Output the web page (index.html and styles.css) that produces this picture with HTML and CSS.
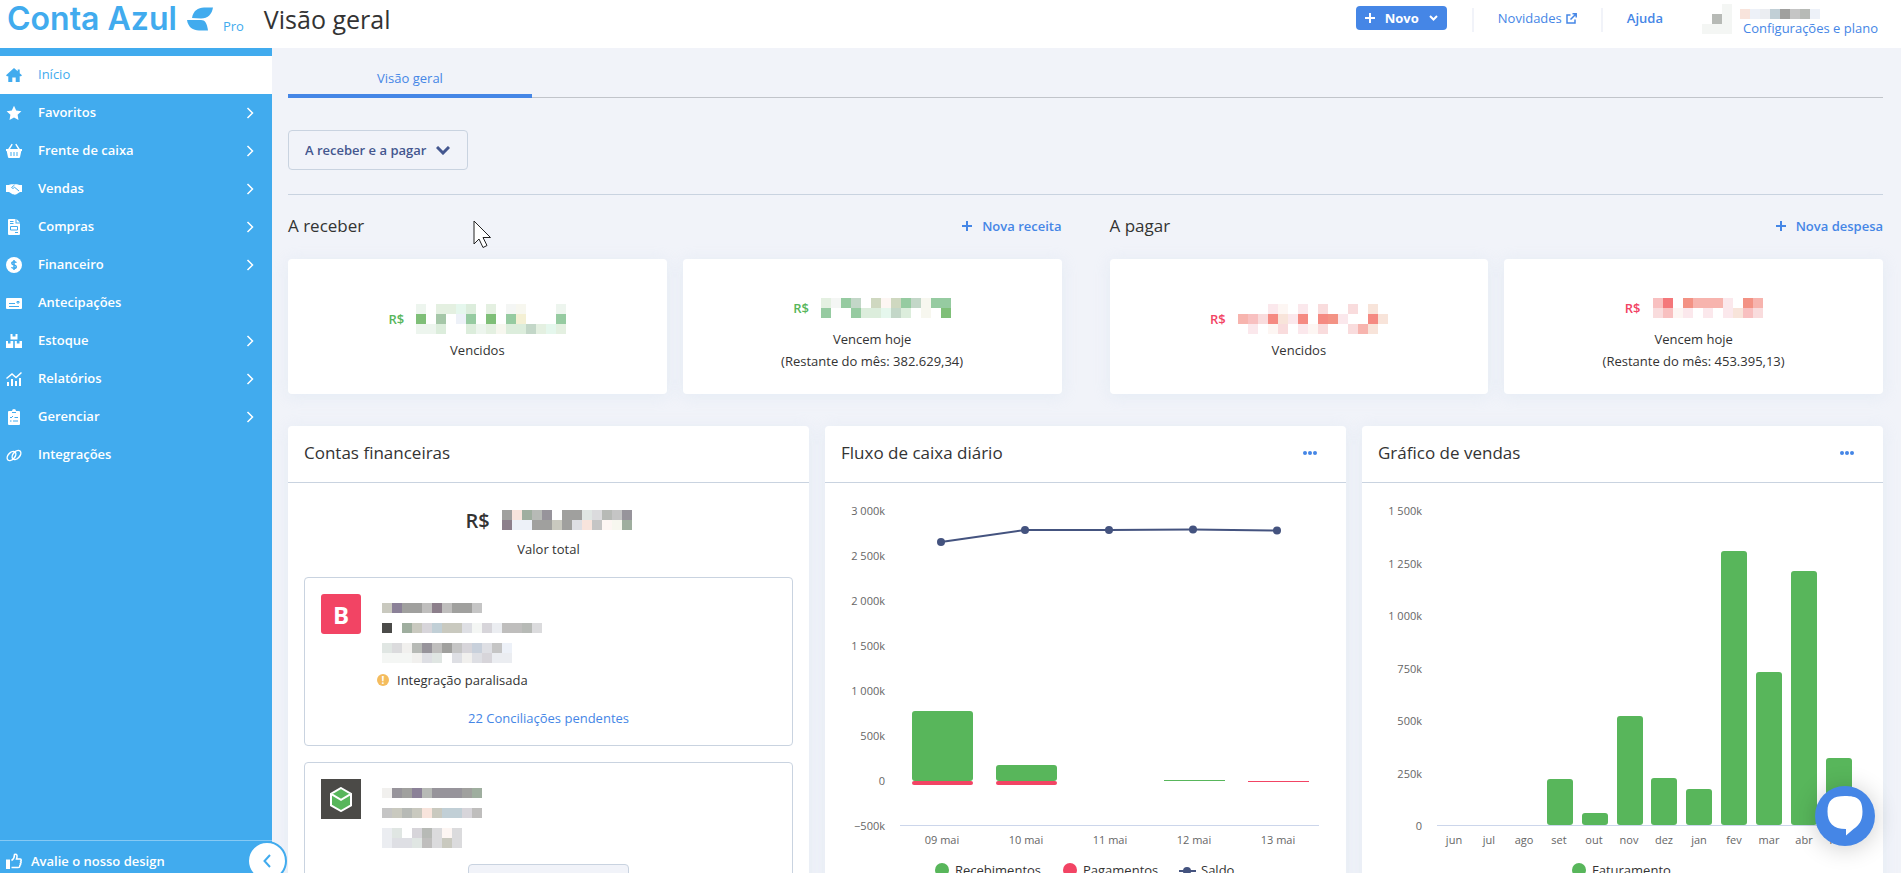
FILE: index.html
```html
<!DOCTYPE html>
<html lang="pt-BR">

<head>
    <meta charset="UTF-8">
    <meta name="viewport" content="width=device-width, initial-scale=1.0">
    <title>Conta Azul Pro - Visão geral</title>
    <link rel="stylesheet" href="styles.css">
</head>

<body>
    <header class="topbar">
        <a class="logo" href="#">
            <span class="logo-name">Conta Azul</span>
            <svg class="logo-bird" width="26" height="24" viewBox="0 0 26 24">
                <path d="M5 11C6 4 11 .5 17 .5h9C25 7 21 11.500 14 11.500z" />
                <path d="M0 13h14c4 0 6 3 7 10.500h-9C6 23.500 1 20 0 13z" />
            </svg>
            <span class="logo-plan">Pro</span>
        </a>
        <h1 class="page-title">Visão geral</h1>

        <div class="topbar-actions">
            <button class="btn-new" type="button">
                <svg width="10" height="10" viewBox="0 0 10 10"><path d="M5 0v10M0 5h10" /></svg>
                Novo
                <svg width="9" height="6" viewBox="0 0 9 6"><path d="M1 1l3.500 3.500L8 1" /></svg>
            </button>
            <a class="top-link top-news" href="#">Novidades
                <svg width="11" height="11" viewBox="0 0 11 11"><path d="M4.500 2H1v8h8V6.500M6.500 .8h3.700v3.700M10 1L4.500 6.500" /></svg>
            </a>
            <a class="top-link top-help" href="#">Ajuda</a>
            <div class="user">
                <svg class="mosaic" data-rows="..l|.nl|lll"></svg>
                <div class="user-info">
                    <svg class="mosaic" data-rows="pqmjcfnq"></svg>
                    <a href="#">Configurações e plano</a>
                </div>
            </div>
        </div>
    </header>

    <div class="layout">
        <aside class="sidebar">
            <nav class="menu">
                <a class="menu-item active" href="#">
                    <svg class="icon" viewBox="0 0 16 16"><path d="M8 1L0 8.200 1 9.300h1.300V15H6.300v-4.500h3.400V15h4V9.300H15l1-1.100-2.300-2V2.500h-2v1.800z" /></svg>
                    <span>Início</span>
                </a>
                <a class="menu-item" href="#">
                    <svg class="icon" viewBox="0 0 16 16"><path d="M8 .8l2.200 4.700 5.200.7-3.800 3.600.9 5.200L8 12.500 3.500 15l.9-5.200L.6 6.200l5.200-.7z" /></svg>
                    <span>Favoritos</span>
                    <svg class="chevron" viewBox="0 0 8 12"><path d="M1.500 1l5 5-5 5" /></svg>
                </a>
                <a class="menu-item" href="#">
                    <svg class="icon" viewBox="0 0 16 16"><path d="M0 6h2.200L5.600.8l1.200.7L4 6h8L9.200 1.500l1.200-.7L13.800 6H16v2h-.7L14 14.200c-.1.500-.5.800-1 .800H3c-.5 0-.9-.3-1-.8L.7 8H0zM4.500 9v4h1V9zm3 0v4h1V9zm3 0v4h1V9z" fill-rule="evenodd" /></svg>
                    <span>Frente de caixa</span>
                    <svg class="chevron" viewBox="0 0 8 12"><path d="M1.500 1l5 5-5 5" /></svg>
                </a>
                <a class="menu-item" href="#">
                    <svg class="icon" viewBox="0 0 16 16"><path d="M0 4h2.600L5 3.200h6l2.400.8H16v7h-2l-3.500 2.300c-1 .6-3.500.4-4.300-.3L3 11H0z" /><path class="cut" d="M8.500 4L5.600 6.500c.6 1.200 2 1 3-.2L13 10" /></svg>
                    <span>Vendas</span>
                    <svg class="chevron" viewBox="0 0 8 12"><path d="M1.500 1l5 5-5 5" /></svg>
                </a>
                <a class="menu-item" href="#">
                    <svg class="icon" viewBox="0 0 16 16"><path d="M3 0h6.500v4.500H14V15a1 1 0 0 1-1 1H3a1 1 0 0 1-1-1V1a1 1 0 0 1 1-1zM10.500 0L14 3.500h-3.500z" /><path class="cut" d="M4 2.500h3.500M4 4.500h3.500M4.500 7.500h7v3.500h-7zM9 13.500h3" /></svg>
                    <span>Compras</span>
                    <svg class="chevron" viewBox="0 0 8 12"><path d="M1.500 1l5 5-5 5" /></svg>
                </a>
                <a class="menu-item" href="#">
                    <svg class="icon" viewBox="0 0 16 16"><circle cx="8" cy="8" r="8" /><path class="cut" d="M8 3v10M10.300 5.800C9.800 4.300 5.800 4.300 5.800 6.300c0 2.200 4.500 1.200 4.500 3.400 0 2.100-4.200 2-4.700.4" stroke-width="1.500" /></svg>
                    <span>Financeiro</span>
                    <svg class="chevron" viewBox="0 0 8 12"><path d="M1.500 1l5 5-5 5" /></svg>
                </a>
                <a class="menu-item" href="#">
                    <svg class="icon" viewBox="0 0 16 16"><rect y="3" width="16" height="11" rx="1" /><path class="cut" d="M3 8.500h6M3 11.500h10M11 6.500h2V8h-2z" /></svg>
                    <span>Antecipações</span>
                </a>
                <a class="menu-item" href="#">
                    <svg class="icon" viewBox="0 0 16 16"><path d="M4.500 1h2v2.500h3V1h2v5.500h-7zM0 8h2v2.500h2.500V8h2.700v7H0zM8.800 8h2v2.500h2.700V8H16v7H8.800z" /></svg>
                    <span>Estoque</span>
                    <svg class="chevron" viewBox="0 0 8 12"><path d="M1.500 1l5 5-5 5" /></svg>
                </a>
                <a class="menu-item" href="#">
                    <svg class="icon" viewBox="0 0 16 16"><path d="M1 11h2v4H1zM5 8h2v7H5zM9 10h2v5H9zM13 7h2v8h-2z" /><path class="line" d="M.5 7.500L6 3l4 3.500 5.500-5" /></svg>
                    <span>Relatórios</span>
                    <svg class="chevron" viewBox="0 0 8 12"><path d="M1.500 1l5 5-5 5" /></svg>
                </a>
                <a class="menu-item" href="#">
                    <svg class="icon" viewBox="0 0 16 16"><path d="M3 2h3a2 2 0 0 1 4 0h3a1 1 0 0 1 1 1v12a1 1 0 0 1-1 1H3a1 1 0 0 1-1-1V3a1 1 0 0 1 1-1z" /><path class="cut" d="M6 3.500h4M4 8l1 1 2-2M8.500 8.500H12M4 12h1.500M7 12h5" /></svg>
                    <span>Gerenciar</span>
                    <svg class="chevron" viewBox="0 0 8 12"><path d="M1.500 1l5 5-5 5" /></svg>
                </a>
                <a class="menu-item" href="#">
                    <svg class="icon" viewBox="0 0 16 16"><ellipse class="line" cx="5.500" cy="9" rx="3.300" ry="5.300" transform="rotate(42 5.500 9)" /><ellipse class="line" cx="10.500" cy="8" rx="3.300" ry="5.300" transform="rotate(42 10.500 8)" /></svg>
                    <span>Integrações</span>
                </a>
            </nav>
            <div class="sidebar-footer">
                <a class="rate" href="#">
                    <svg width="16" height="16" viewBox="0 0 16 16"><path class="thumb" d="M0 6.500h4V16H0z" /><path class="line" d="M5.500 7.500c2-1.200 3-3 3-6C10.500.5 11.800 2 10.500 6H14c1.500 0 1.500 1.600.7 2.200.7.700.5 1.800-.3 2.200.4.800.2 1.600-.6 2 .2 1.300-.4 2-1.800 2H5.500" /></svg>
                    Avalie o nosso design
                </a>
                <button class="collapse" type="button" aria-label="Recolher menu">
                    <svg width="8" height="14" viewBox="0 0 8 14"><path d="M7 1L1.500 7 7 13" /></svg>
                </button>
            </div>
        </aside>

        <main class="content">
            <div class="tabs">
                <button class="tab" type="button">Visão geral</button>
            </div>

            <div class="filter">
                <div class="select-box">
                    <select class="select" aria-label="Exibir">
                        <option>A receber e a pagar</option>
                    </select>
                    <svg class="select-arrow" width="14" height="9" viewBox="0 0 14 9"><path d="M1 1l6 6 6-6" /></svg>
                </div>
            </div>

            <div class="summary">
                <section>
                    <div class="summary-head">
                        <h2>A receber</h2>
                        <a href="#"><svg width="10" height="10" viewBox="0 0 10 10"><path d="M5 0v10M0 5h10" /></svg>Nova receita</a>
                    </div>
                    <div class="summary-cards">
                        <div class="summary-card">
                            <div class="amount green">R$ <svg class="mosaic" data-rows="F.EEID.E.lK...F|A.C.qB.A.BG...B|FFD..DFEKDDHEIE"></svg></div>
                            <p>Vencidos</p>
                        </div>
                        <div class="summary-card">
                            <div class="amount green">R$ <svg class="mosaic" data-rows="ElBH.JYJBHKBB|B..BDDIHD.K.A"></svg></div>
                            <p>Vencem hoje</p>
                            <p>(Restante do mês: 382.629,34)</p>
                        </div>
                    </div>
                </section>
                <section>
                    <div class="summary-head">
                        <h2>A pagar</h2>
                        <a href="#"><svg width="10" height="10" viewBox="0 0 10 10"><path d="M5 0v10M0 5h10" /></svg>Nova despesa</a>
                    </div>
                    <div class="summary-cards">
                        <div class="summary-card">
                            <div class="amount red">R$ <svg class="mosaic" data-rows="...UY.U.T..T.X.|SVTRXUR.RZU..RX|.U.YT.UYT..TSX."></svg></div>
                            <p>Vencidos</p>
                        </div>
                        <div class="summary-card">
                            <div class="amount red">R$ <svg class="mosaic" data-rows="VW.ZSSSU.ZS|TVYU.U.UXVT"></svg></div>
                            <p>Vencem hoje</p>
                            <p>(Restante do mês: 453.395,13)</p>
                        </div>
                    </div>
                </section>
            </div>

            <div class="panels">
                <section class="panel">
                    <div class="panel-head">
                        <h2>Contas financeiras</h2>
                    </div>
                    <div class="accounts">
                        <div class="total">R$ <svg class="mosaic" data-rows="cpgnr.cctonfr|eqqcchckpfYKg"></svg></div>
                        <p class="total-label">Valor total</p>
                        <article class="account">
                            <div class="account-main">
                                <div class="bank bank-b">B</div>
                                <div class="account-data">
                                    <svg class="mosaic" data-rows="hbccdedccf"></svg>
                                    <svg class="mosaic" data-rows="a.ghijhhklimddno"></svg>
                                    <svg class="mosaic" data-rows="tounrdcfiskfq|lllukt.kukimm"></svg>
                                </div>
                            </div>
                            <p class="warning"><span class="warning-icon">!</span>Integração paralisada</p>
                            <a class="pending" href="#">22 Conciliações pendentes</a>
                        </article>
                        <article class="account">
                            <div class="account-main">
                                <div class="bank bank-box">
                                    <svg width="22" height="25" viewBox="0 0 22 25">
                                        <path d="M11 1l10 5.800v11.500L11 24 1 18.300V6.800z" />
                                        <path d="M1 6.800l10 6 10-6" />
                                    </svg>
                                </div>
                                <div class="account-data">
                                    <svg class="mosaic" data-rows="urcbnrrrcg"></svg>
                                    <svg class="mosaic" data-rows="fhnhphjjid"></svg>
                                    <svg class="mosaic" data-rows="mt.inoYo|mkktdoho"></svg>
                                </div>
                            </div>
                            <button class="account-btn" type="button" aria-label="Conciliar"></button>
                        </article>
                    </div>
                </section>

                <section class="panel">
                    <div class="panel-head">
                        <h2>Fluxo de caixa diário</h2>
                        <button class="more" type="button" aria-label="Mais opções"><i></i><i></i><i></i></button>
                    </div>
                    <svg class="chart" id="cashChart" viewBox="0 0 521 420"></svg>
                </section>

                <section class="panel">
                    <div class="panel-head">
                        <h2>Gráfico de vendas</h2>
                        <button class="more" type="button" aria-label="Mais opções"><i></i><i></i><i></i></button>
                    </div>
                    <svg class="chart" id="salesChart" viewBox="0 0 521 420"></svg>
                </section>
            </div>
        </main>
    </div>

    <button class="chat" type="button" aria-label="Abrir chat">
        <svg width="36" height="40" viewBox="0 0 36 40"><path d="M18 0c12 0 17.500 3 17.500 15.500 0 10-4 14-9 17.500L19 39.500V33C6 33 .5 27 .5 15.500S6 0 18 0z" /></svg>
    </button>

    <svg class="pointer" width="19" height="28" viewBox="0 0 19 28"><path d="M1 1v23l5-5 4 8.500 4-2-4-8h7.500z" /></svg>

    <script src="script.js"></script>
</body>

</html>
```
FILE: styles.css
```css
* {
    box-sizing: border-box;
}

body {
    margin: 0;
    height: 100vh;
    display: flex;
    flex-direction: column;
    overflow: hidden;
    font-family: "Open Sans", "Noto Sans", sans-serif;
    font-size: 13px;
    color: #333;
    background-color: #f1f3f9;
}

h1,
h2,
p {
    margin: 0;
    font-weight: 500;
}

a {
    color: #4586e6;
    text-decoration: none;
}

button,
select {
    font: inherit;
    cursor: pointer;
}

svg {
    display: block;
    flex-shrink: 0;
}

/* Topo */
.topbar {
    height: 48px;
    flex-shrink: 0;
    display: flex;
    align-items: flex-start;
    padding: 0 23px 0 7px;
    background-color: #fff;
}

.logo {
    display: flex;
    align-items: flex-end;
    height: 37px;
    color: #41abee;
}

.logo-name {
    font-family: Inter, sans-serif;
    font-size: 32px;
    font-weight: 600;
    line-height: 36px;
}

.logo-bird {
    margin: 0 10px 6px;
    fill: #41abee;
}

.logo-plan {
    font-size: 13px;
    line-height: 22px;
    font-weight: 500;
}

.page-title {
    margin-left: 20px;
    font-size: 25px;
    line-height: 38px;
}

.topbar-actions {
    display: flex;
    margin-left: auto;
}

.btn-new {
    display: flex;
    align-items: center;
    gap: 10px;
    height: 24px;
    margin: 6px 25px 0 0;
    padding: 0 9px;
    border: none;
    border-radius: 4px;
    background-color: #4586e6;
    color: #fff;
    font-weight: 700;
}

.btn-new svg {
    fill: none;
    stroke: #fff;
    stroke-width: 2;
}

.top-link {
    display: flex;
    align-items: center;
    gap: 4px;
    height: 24px;
    margin-top: 8px;
    padding: 0 24px;
    border-left: 2px solid #f1f3f9;
    line-height: 20px;
}

.top-link svg {
    fill: none;
    stroke: #4586e6;
    stroke-width: 1.5;
}

.top-news,
.top-help {
    padding-bottom: 4px;
}

.top-help {
    font-weight: 600;
}

.user {
    display: flex;
    gap: 8px;
    margin-left: 15px;
    padding-top: 4px;
}

.user-info {
    padding-top: 5px;
    line-height: 18px;
}

.user-info a {
    padding-left: 3px;
}

/* Menu lateral */
.layout {
    flex: 1;
    min-height: 0;
    display: flex;
}

.sidebar {
    width: 272px;
    flex-shrink: 0;
    display: flex;
    flex-direction: column;
    padding-top: 8px;
    background-color: #41abee;
}

.menu {
    flex: 1;
}

.menu-item {
    display: flex;
    align-items: center;
    gap: 16px;
    height: 38px;
    padding: 0 18px 0 6px;
    color: #fff;
    font-weight: 600;
}

.menu-item span {
    padding-bottom: 2px;
}

.menu-item.active {
    background-color: #fff;
    color: #41abee;
    font-weight: 500;
}

.icon {
    width: 16px;
    height: 16px;
    fill: currentColor;
}

.icon .cut {
    fill: none;
    stroke: #41abee;
}

.icon .line,
.rate .line {
    fill: none;
    stroke: #fff;
    stroke-width: 1.5;
}

.chevron {
    width: 8px;
    height: 12px;
    margin-left: auto;
    fill: none;
    stroke: #fff;
    stroke-width: 1.5;
}

.sidebar-footer {
    position: relative;
    height: 33px;
    padding: 10px 6px 0;
    border-top: 1px solid #86c9f4;
}

.rate {
    display: flex;
    align-items: center;
    gap: 9px;
    height: 20px;
    color: #fff;
    font-weight: 600;
}

.rate .thumb {
    fill: #fff;
}

.collapse {
    position: absolute;
    left: 247px;
    top: 0;
    width: 40px;
    height: 40px;
    display: flex;
    align-items: center;
    justify-content: center;
    padding: 0;
    border: 2px solid #41abee;
    border-radius: 50%;
    background-color: #fff;
}

.collapse svg {
    fill: none;
    stroke: #41abee;
    stroke-width: 2;
}

/* Conteúdo */
.content {
    flex: 1;
    min-width: 0;
    padding: 0 18px 0 16px;
    overflow: hidden;
}

.tabs {
    display: flex;
    height: 50px;
    box-shadow: inset 0 -1px #c1c4ca;
}

.tab {
    width: 244px;
    padding: 14px 0 0;
    border: none;
    border-bottom: 4px solid #4586e6;
    background: none;
    color: #4586e6;
    font-weight: 500;
}

.filter {
    padding: 32px 0 24px;
    border-bottom: 1px solid #c9d3e0;
}

.select-box {
    position: relative;
    width: 180px;
}

.select {
    width: 100%;
    height: 40px;
    padding: 0 16px;
    border: 1px solid #c9d3e0;
    border-radius: 4px;
    background: none;
    color: #44578f;
    font-weight: 600;
    appearance: none;
}

.select-arrow {
    position: absolute;
    right: 18px;
    top: 16px;
    fill: none;
    stroke: #44578f;
    stroke-width: 3;
    pointer-events: none;
}

.summary {
    display: grid;
    grid-template-columns: 1fr 1fr;
    gap: 48px;
}

.summary-head {
    display: flex;
    align-items: center;
    justify-content: space-between;
    height: 64px;
    padding-bottom: 2px;
}

.summary-head h2,
.panel-head h2 {
    font-size: 17px;
    line-height: 24px;
}

.summary-head a {
    display: flex;
    align-items: center;
    gap: 10px;
    font-weight: 600;
}

.summary-head svg {
    fill: none;
    stroke: #4586e6;
    stroke-width: 2;
}

.summary-cards {
    display: grid;
    grid-template-columns: 1fr 1fr;
    gap: 16px;
}

.summary-card {
    height: 135px;
    display: flex;
    flex-direction: column;
    align-items: center;
    justify-content: center;
    border-radius: 4px;
    background-color: #fff;
    box-shadow: 0 2px 16px rgba(200, 220, 235, 0.3);
    line-height: 22px;
}

.amount {
    display: flex;
    align-items: center;
    gap: 12px;
    height: 46px;
    padding-top: 6px;
    font-weight: 600;
}

.green {
    color: #58b65b;
}

.red {
    color: #f24464;
}

.panels {
    display: grid;
    grid-template-columns: repeat(3, 1fr);
    gap: 16px;
    align-items: start;
    margin-top: 32px;
}

.panel {
    min-height: 500px;
    border-radius: 4px;
    background-color: #fff;
    box-shadow: 0 2px 16px rgba(200, 220, 235, 0.3);
}

.panel-head {
    display: flex;
    align-items: center;
    justify-content: space-between;
    height: 57px;
    padding: 0 29px 2px 16px;
    border-bottom: 1px solid #c9d3e0;
}

.more {
    display: flex;
    gap: 1px;
    padding: 4px 0;
    border: none;
    background: none;
}

.more i {
    width: 4px;
    height: 4px;
    border-radius: 50%;
    background-color: #4586e6;
}

.accounts {
    padding: 20px 16px;
}

.total {
    display: flex;
    align-items: center;
    justify-content: center;
    gap: 12px;
    height: 34px;
    font-size: 20px;
    font-weight: 600;
}

.total-label {
    margin: 2px 0 18px;
    line-height: 20px;
    text-align: center;
}

.account {
    margin-bottom: 16px;
    padding: 16px;
    border: 1px solid #c9d3e0;
    border-radius: 4px;
    text-align: center;
}

.account-main {
    display: flex;
    gap: 21px;
}

.bank {
    width: 40px;
    height: 40px;
    display: flex;
    align-items: center;
    justify-content: center;
}

.bank-b {
    border-radius: 3px;
    background-color: #f24464;
    color: #fff;
    font-size: 24px;
    font-weight: 700;
}

.bank-box {
    background-color: #4b4a47;
}

.bank-box path {
    fill: #58b65b;
    stroke: #fff;
    stroke-width: 2;
}

.account-data {
    display: flex;
    flex-direction: column;
    gap: 10px;
    padding-top: 9px;
}

.warning {
    display: flex;
    align-items: center;
    gap: 8px;
    height: 20px;
    margin: 7px 0 18px 56px;
}

.warning-icon {
    width: 12px;
    border-radius: 50%;
    background-color: #f4bc5e;
    color: #fff;
    font-size: 10px;
    font-weight: 700;
    line-height: 12px;
}

.pending {
    display: block;
    padding-bottom: 1px;
    line-height: 20px;
}

.account-btn {
    width: 161px;
    height: 32px;
    margin-top: 16px;
    border: 1px solid #c9d3e0;
    border-radius: 4px;
    background-color: #f1f3f9;
}

/* Gráficos */
.chart {
    width: 100%;
}

.chart text {
    font-size: 11px;
    fill: #666;
    dominant-baseline: central;
}

.chart .tick {
    text-anchor: end;
}

.chart .category {
    text-anchor: middle;
}

.chart .legend {
    font-size: 13px;
    fill: #333;
}

.chart .axis {
    stroke: #ccd6eb;
}

.chart .income {
    fill: #58b65b;
}

.chart .expense {
    fill: #f24464;
}

.chart .balance {
    fill: #44537f;
}

.chart .balance-line {
    fill: none;
    stroke: #44537f;
    stroke-width: 2;
}

.chat {
    position: fixed;
    right: 26px;
    bottom: 27px;
    width: 60px;
    height: 60px;
    display: flex;
    align-items: center;
    justify-content: center;
    padding: 0;
    border: none;
    border-radius: 50%;
    background-color: #4586e6;
    box-shadow: 0 2px 24px rgba(0, 0, 0, 0.2);
}

.chat svg {
    fill: #fff;
}

.pointer {
    position: absolute;
    left: 473px;
    top: 220px;
    fill: #fff;
    stroke: #222;
    pointer-events: none;
}
```
FILE: script.js
```js
const colors = {
    a: "#4b4b49", b: "#8b8198", c: "#a0a09e", d: "#bfbebd", e: "#8c7f8b", f: "#c5c5c5",
    g: "#9fae9f", h: "#c9c9bf", i: "#d7d5da", j: "#c1cfd6", k: "#dedfe4", l: "#f4f6f4",
    m: "#ebedf1", n: "#b7bab6", o: "#dbdbdd", p: "#f8e4dc", q: "#edf1f8", r: "#97949b",
    s: "#c8d0db", t: "#e0e6e3", u: "#f1f0ee",
    A: "#7fbf78", B: "#96cba1", C: "#a5c7a8", D: "#dceddc", E: "#e4f0e1", F: "#edf5ee",
    G: "#f4f0d4", H: "#c3d7c8", I: "#e5f7ed", J: "#cfd8c0", K: "#f7f7ef",
    R: "#f58a82", S: "#f7b4ae", T: "#f9dcdd", U: "#fbe8ec", V: "#f8c0c0", W: "#f4777a",
    X: "#f8e4da", Y: "#fdf6f3", Z: "#f39284"
};

// Valores ocultos: cada letra é um bloco de 10px
document.querySelectorAll(".mosaic").forEach(svg => {
    const rows = svg.dataset.rows.split("|");
    svg.setAttribute("width", rows[0].length * 10);
    svg.setAttribute("height", rows.length * 10);
    rows.forEach((row, y) => {
        [...row].forEach((cell, x) => {
            if (cell !== ".") {
                svg.innerHTML += `<rect x="${x * 10}" y="${y * 10}" width="10" height="10" fill="${colors[cell]}"/>`;
            }
        });
    });
});

function formatTick(value) {
    if (value === 0) return "0";
    const text = String(Math.abs(value)).replace(/(\d)(\d{3})$/, "$1 $2") + "k";
    return value < 0 ? "−" + text : text;
}

function drawAxes(ticks, categories, step) {
    const gap = 315 / (ticks.length - 1);
    let html = ticks.map((t, i) => `<text class="tick" x="60" y="${27 + Math.round(i * gap)}">${formatTick(t)}</text>`).join("");
    html += categories.map((c, i) => `<text class="category" x="${Math.round(75 + step * (i + 0.5))}" y="356">${c}</text>`).join("");
    return html + `<path class="axis" d="M75 342.5H494"/>`;
}

function drawBar(type, x, y, width, height) {
    const radius = height > 2 ? Math.min(3, height / 2) : 0;
    return `<rect class="${type}" x="${Math.round(x)}" y="${Math.round(y)}" width="${width}" height="${height}" rx="${radius}"/>`;
}

// Fluxo de caixa diário
const days = [
    { name: "09 mai", income: 778, expense: 44, balance: 2656 },
    { name: "10 mai", income: 178, expense: 44, balance: 2789 },
    { name: "11 mai", income: 0, expense: 0, balance: 2789 },
    { name: "12 mai", income: 11, expense: 0, balance: 2795 },
    { name: "13 mai", income: 0, expense: 11, balance: 2783 }
];

let cash = drawAxes([3000, 2500, 2000, 1500, 1000, 500, 0, -500], days.map(d => d.name), 84);
const points = [];
days.forEach((d, i) => {
    const x = 87 + i * 84;
    const income = Math.round(d.income * 0.09);
    const expense = Math.round(d.expense * 0.09);
    if (income) cash += drawBar("income", x, 298 - income, 61, income);
    if (expense) cash += drawBar("expense", x, 298, 61, expense);
    points.push([116 + i * 84, 298 - d.balance * 0.09]);
});
cash += `<polyline class="balance-line" points="${points.join(" ")}"/>`;
cash += points.map(p => `<circle class="balance" cx="${p[0]}" cy="${p[1]}" r="4"/>`).join("");
cash += `
    <circle class="income" cx="117" cy="387" r="7"/><text class="legend" x="130" y="387">Recebimentos</text>
    <circle class="expense" cx="245" cy="387" r="7"/><text class="legend" x="258" y="387">Pagamentos</text>
    <path class="balance-line" d="M354 388h17"/><circle class="balance" cx="362" cy="388" r="4"/>
    <text class="legend" x="376" y="387">Saldo</text>`;
document.getElementById("cashChart").innerHTML = cash;

// Gráfico de vendas
const months = ["jun", "jul", "ago", "set", "out", "nov", "dez", "jan", "fev", "mar", "abr", "mai"];
const sales = [0, 0, 0, 220, 57, 521, 225, 172, 1309, 731, 1213, 320];

let salesHtml = drawAxes([1500, 1250, 1000, 750, 500, 250, 0], months, 419 / 12);
sales.forEach((value, i) => {
    const height = Math.round(value * 0.2093);
    if (height) salesHtml += drawBar("income", 80 + i * 34.9, 342 - height, 26, height);
});
salesHtml += `<circle class="income" cx="217" cy="387" r="7"/><text class="legend" x="230" y="387">Faturamento</text>`;
document.getElementById("salesChart").innerHTML = salesHtml;
```
